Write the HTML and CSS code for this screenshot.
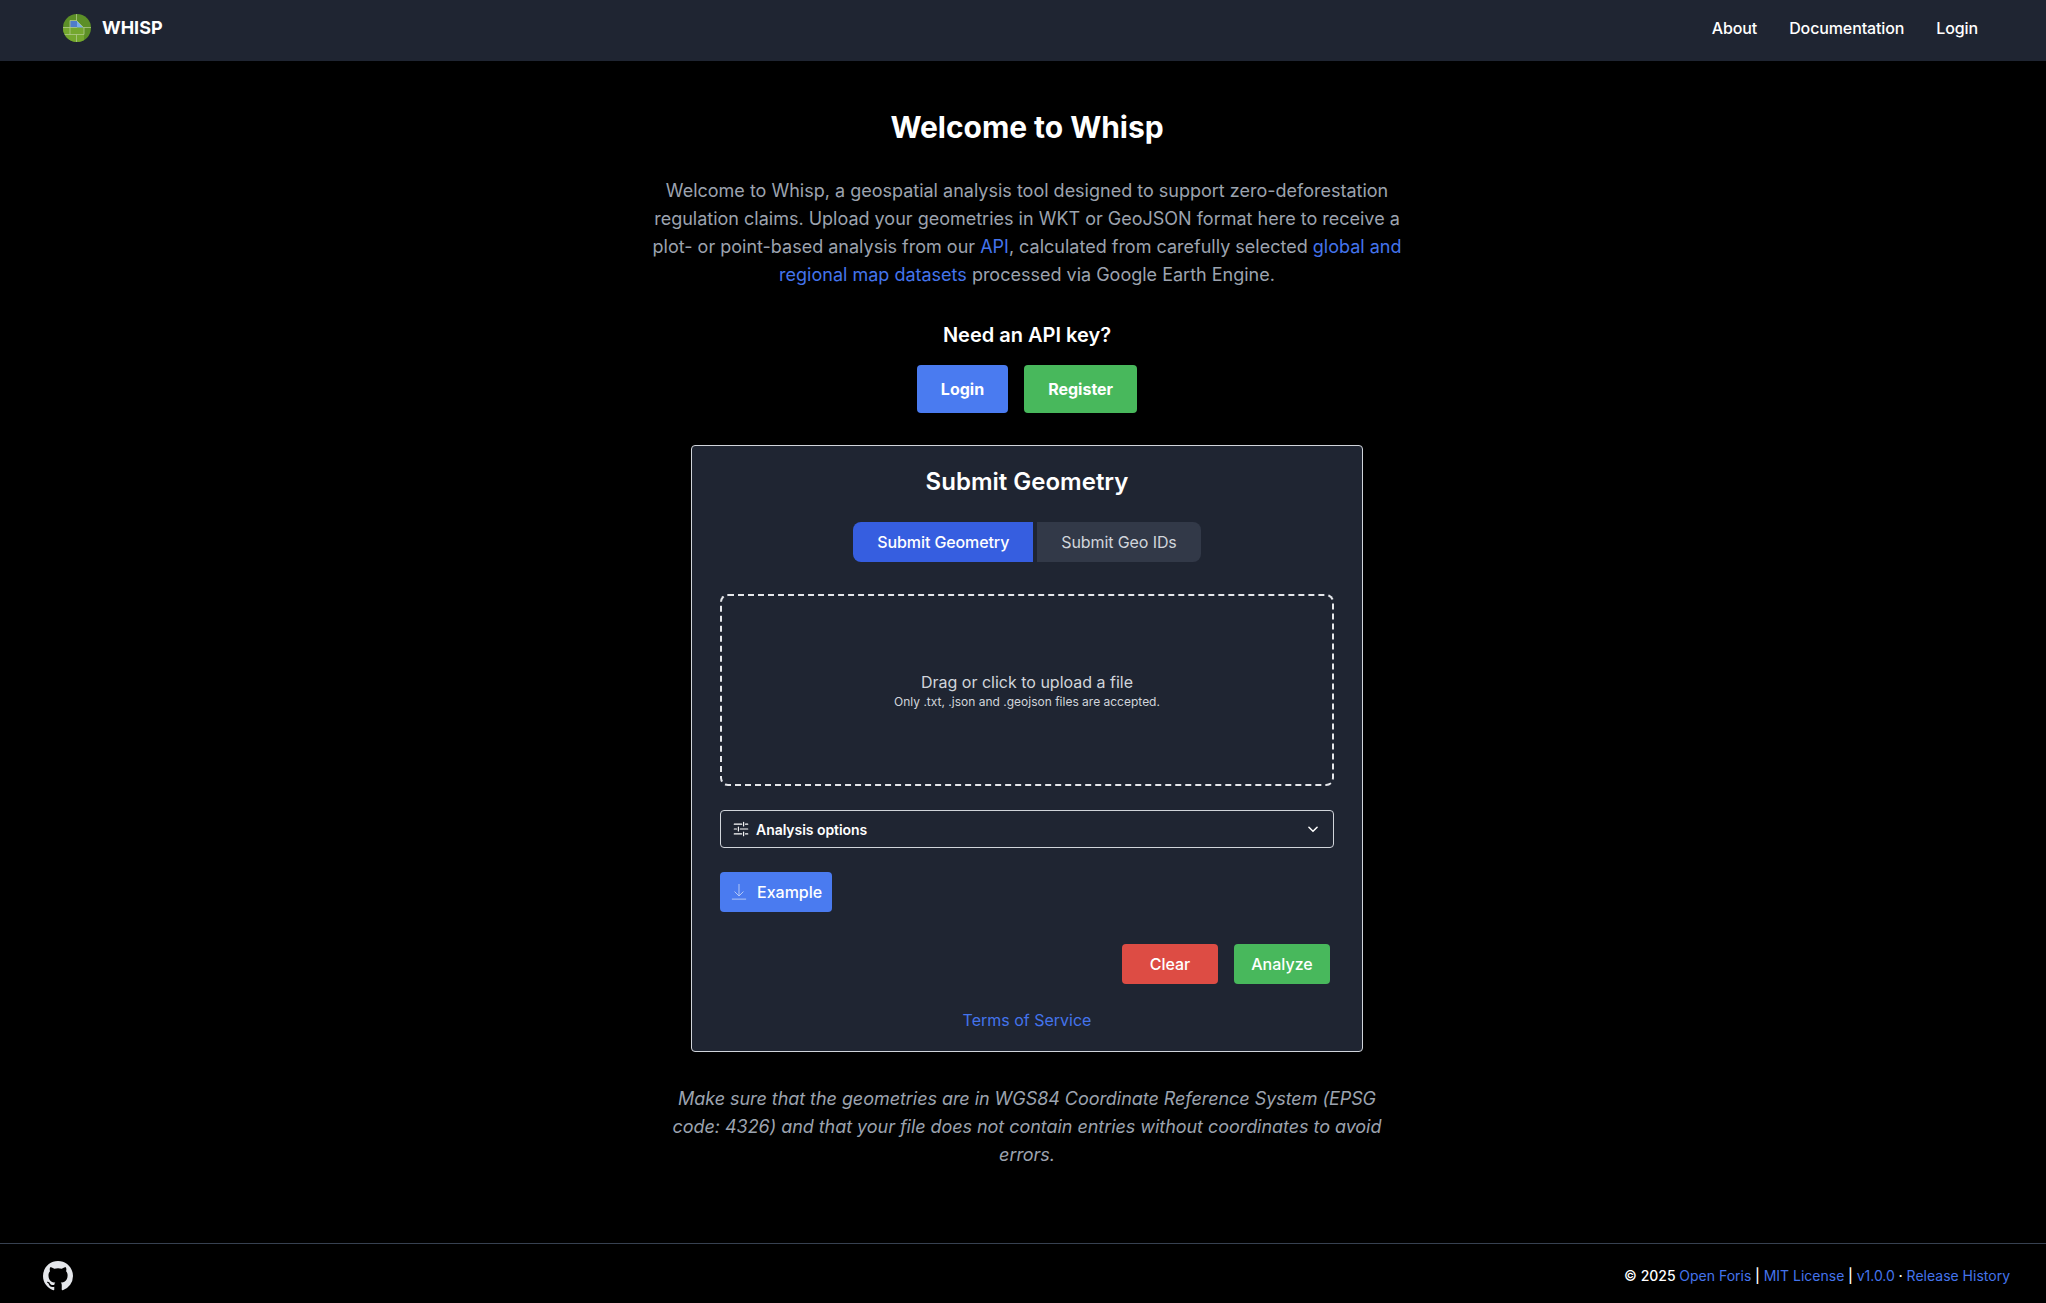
FILE: index.html
```html
<!DOCTYPE html>
<html lang="en">
<head>
<meta charset="utf-8">
<title>Whisp</title>
<link rel="stylesheet" href="styles.css">
</head>
<body>
<header class="topbar">
  <a class="brand" href="#">
    <svg class="brand-logo" viewBox="0 0 28 28" aria-hidden="true">
      <defs><clipPath id="disc"><circle cx="14" cy="14" r="14"/></clipPath></defs>
      <g clip-path="url(#disc)">
        <rect width="28" height="28" fill="#5c8f27"/>
        <rect x="0" y="13" width="21" height="15" fill="#74a72e"/>
        <rect x="7" y="7" width="7" height="6.500" fill="#4f7ccb"/>
        <path d="M14 7 L20.500 13.500 L14 13.500 Z" fill="#78abe8"/>
        <path d="M13.500 0V7M7 6.500H13.500L20.500 13.500H28M7 6.500V13.500M0 13.500H14M7 13.500V20.500M0 20.500H14M13.500 20.500V28M14 20.500H21V13.500" fill="none" stroke="#aec98a" stroke-width="0.800"/>
      </g>
    </svg>
    <span class="brand-name">WHISP</span>
  </a>
  <nav class="topnav">
    <a href="#">About</a>
    <a href="#">Documentation</a>
    <a href="#">Login</a>
  </nav>
</header>

<main class="page">
  <h1 class="title">Welcome to Whisp</h1>
  <p class="intro">Welcome to Whisp, a geospatial analysis tool designed to support zero-deforestation regulation claims. Upload your geometries in WKT or GeoJSON format here to receive a plot- or point-based analysis from our <a href="#">API</a>, calculated from carefully selected <a href="#">global and regional map datasets</a> processed via Google Earth Engine.</p>
  <h2 class="key-title">Need an API key?</h2>
  <div class="key-actions">
    <a class="key-btn blue" href="#">Login</a>
    <a class="key-btn green" href="#">Register</a>
  </div>

  <section class="card">
    <h2 class="card-title">Submit Geometry</h2>
    <div class="tabs">
      <button class="tab active">Submit Geometry</button>
      <button class="tab">Submit Geo IDs</button>
    </div>
    <div class="dropzone">
      <p class="drop-main">Drag or click to upload a file</p>
      <p class="drop-sub">Only .txt, .json and .geojson files are accepted.</p>
    </div>
    <button class="options">
      <svg class="options-icon" viewBox="0 0 24 24" fill="none" stroke="currentColor" stroke-width="1.500" stroke-linecap="round" aria-hidden="true"><path d="M3 5.500H13M18 5.500H21M15.500 3V8M3 12H6M11 12H21M8.500 9.500V14.500M3 18.500H13M18 18.500H21M15.500 16V21"/></svg>
      <span class="options-label">Analysis options</span>
      <svg class="options-chevron" viewBox="0 0 12 12" fill="none" stroke="currentColor" stroke-width="1.300" stroke-linecap="round" stroke-linejoin="round" aria-hidden="true"><path d="M2.500 4.500L6 8L9.500 4.500"/></svg>
    </button>
    <button class="example">
      <svg class="example-icon" viewBox="0 0 18 18" fill="none" stroke="#b4c9f7" stroke-width="1.100" aria-hidden="true"><path d="M9 0V13.500M4 8.500L9 13.500L14 8.500M1 17H17"/></svg>
      <span>Example</span>
    </button>
    <div class="actions">
      <button class="act red">Clear</button>
      <button class="act green">Analyze</button>
    </div>
    <a class="terms" href="#">Terms of Service</a>
  </section>

  <p class="note">Make sure that the geometries are in WGS84 Coordinate Reference System (EPSG code: 4326) and that your file does not contain entries without coordinates to avoid errors.</p>
</main>

<footer class="footer">
  <a class="gh" href="#" aria-label="GitHub">
    <svg viewBox="0 0 16 16" aria-hidden="true"><path fill="#e5e7eb" d="M8 0C3.580 0 0 3.580 0 8c0 3.540 2.290 6.530 5.470 7.590.4.070.55-.17.55-.38 0-.19-.01-.82-.01-1.490-2.010.37-2.530-.49-2.690-.94-.09-.23-.48-.94-.82-1.130-.28-.15-.68-.52-.01-.53.63-.01 1.080.58 1.230.82.720 1.210 1.870.870 2.330.660.070-.52.280-.870.510-1.070-1.780-.2-3.640-.890-3.640-3.950 0-.870.310-1.590.820-2.150-.08-.2-.36-1.020.08-2.120 0 0 .670-.210 2.200.820.640-.18 1.320-.270 2-.270s1.360.09 2 .270c1.530-1.040 2.200-.820 2.200-.820.440 1.100.160 1.920.080 2.120.510.560.820 1.270.820 2.150 0 3.070-1.870 3.750-3.650 3.950.290.250.540.730.540 1.480 0 1.070-.01 1.930-.01 2.200 0 .210.150.460.550.380A8.010 8.010 0 0 0 16 8c0-4.420-3.580-8-8-8z"/></svg>
  </a>
  <div class="legal">© 2025 <a href="#">Open Foris</a> | <a href="#">MIT License</a> | <a href="#">v1.0.0</a> · <a href="#">Release History</a></div>
</footer>
</body>
</html>
```

FILE: styles.css
```css
* { box-sizing: border-box; }
html, body { margin: 0; padding: 0; }
body {
  background: #000;
  color: #fff;
  font-family: Inter, "Noto Sans", sans-serif;
  min-height: 1303px;
  display: flex;
  flex-direction: column;
}
a { text-decoration: none; color: inherit; }
button { font-family: inherit; border: 0; cursor: pointer; }
p, h1, h2 { margin: 0; }

.topbar {
  height: 61px;
  background: #1f2532;
  display: flex;
  align-items: center;
  justify-content: space-between;
  padding: 0 68px 6px 63px;
}
.brand { display: flex; align-items: center; gap: 11px; }
.brand-logo { width: 28px; height: 28px; display: block; }
.brand-name { font-size: 18px; font-weight: 700; line-height: 28px; }
.topnav { display: flex; gap: 32px; font-size: 16px; font-weight: 500; letter-spacing: -0.12px; padding-top: 1px; }

.page {
  flex: 1;
  display: flex;
  flex-direction: column;
  align-items: center;
  padding: 48px 0 0 8px;
}
.title { font-size: 30px; font-weight: 700; line-height: 36px; letter-spacing: -0.05px; }
.intro {
  width: 768px;
  margin-top: 32px;
  font-size: 18px;
  line-height: 28px;
  color: #9ca3af;
  text-align: center;
}
.intro a, .terms, .legal a { color: #4474ec; }
.key-title { margin-top: 32px; font-size: 20px; font-weight: 600; line-height: 28px; }
.key-actions { display: flex; gap: 16px; margin-top: 16px; }
.key-btn {
  height: 48px;
  padding: 0 24px;
  border-radius: 4px;
  font-size: 16px;
  font-weight: 700;
  line-height: 48px;
}
.blue { background: #4a7bf0; }
.green { background: #48b85c; }
.red { background: #dd4c44; }

.card {
  width: 672px;
  height: 607px;
  margin-top: 32px;
  padding: 20px 28px 0;
  background: #1f2532;
  border: 1px solid #d1d5db;
  border-radius: 4px;
  display: flex;
  flex-direction: column;
}
.card-title { font-size: 24px; font-weight: 600; line-height: 32px; text-align: center; }
.tabs { display: flex; justify-content: center; gap: 4px; margin-top: 24px; }
.tab {
  height: 40px;
  padding: 0 24px;
  background: #323948;
  color: #d1d5db;
  font-size: 16px;
  letter-spacing: -0.1px;
  border-radius: 0 8px 8px 0;
}
.tab.active { background: #365ee0; color: #fff; font-weight: 500; border-radius: 8px 0 0 8px; }
.dropzone {
  height: 192px;
  margin-top: 32px;
  border: 2px dashed #e5e7eb;
  border-radius: 8px;
  display: flex;
  flex-direction: column;
  align-items: center;
  justify-content: center;
}
.drop-main { font-size: 16px; line-height: 24px; color: #d1d5db; }
.drop-sub { font-size: 12px; line-height: 16px; color: #d1d5db; }
.options {
  height: 38px;
  margin-top: 24px;
  padding: 0 12px;
  background: transparent;
  color: #fff;
  border: 1px solid #d1d5db;
  border-radius: 4px;
  display: flex;
  align-items: center;
  font-size: 14px;
  font-weight: 600;
  letter-spacing: -0.05px;
}
.options-icon { width: 18px; height: 18px; margin-right: 6px; margin-left: -1px; }
.options-label { flex: 1; text-align: left; }
.options-chevron { width: 14px; height: 14px; margin-right: 1px; }
.example {
  align-self: flex-start;
  width: 112px;
  height: 40px;
  margin-top: 24px;
  padding: 0 0 0 11px;
  background: #4a7bf0;
  color: #fff;
  border-radius: 4px;
  display: flex;
  align-items: center;
  gap: 10px;
  font-size: 16px;
  font-weight: 500;
}
.example-icon { width: 16px; height: 18px; }
.actions { display: flex; justify-content: flex-end; gap: 16px; margin-top: 32px; padding-right: 4px; }
.act {
  width: 96px;
  height: 40px;
  color: #fff;
  border-radius: 4px;
  font-size: 16px;
  font-weight: 500;
}
.terms { align-self: center; margin-top: 24px; font-size: 16px; line-height: 24px; }
.note {
  width: 720px;
  margin-top: 33px;
  font-size: 18px;
  line-height: 28px;
  font-style: italic;
  letter-spacing: -0.05px;
  color: #9ca3af;
  text-align: center;
}

.footer {
  height: 60px;
  border-top: 1px solid #374151;
  display: flex;
  align-items: center;
  justify-content: space-between;
  padding: 4px 36px 0 43px;
}
.gh { display: block; width: 30px; height: 30px; }
.gh svg { display: block; width: 30px; height: 30px; }
.legal { font-size: 14px; font-weight: 500; line-height: 20px; }
.legal a { font-weight: 400; }
```
